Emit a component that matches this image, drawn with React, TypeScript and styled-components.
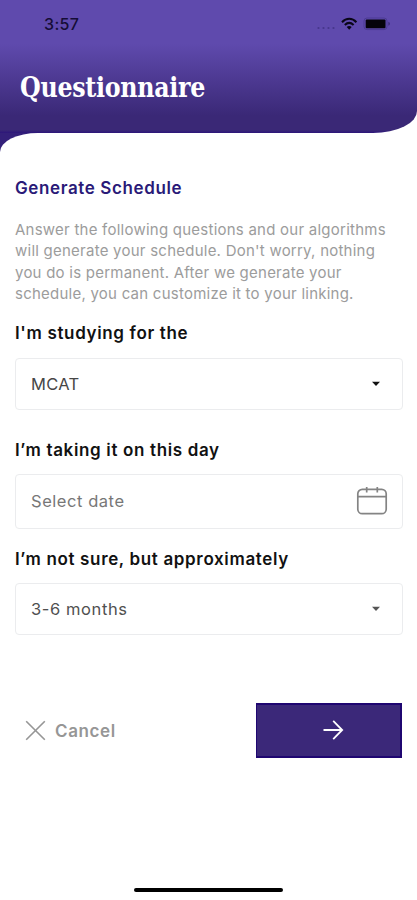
import React from "react";
import styled, { createGlobalStyle } from "styled-components";

const GlobalStyle = createGlobalStyle`
  *, *::before, *::after { box-sizing: border-box; }
  html, body { margin: 0; background: #fff; }
  body { font-family: Inter, "Liberation Sans", sans-serif; }
  button { font: inherit; border: 0; background: none; padding: 0; margin: 0; }
  h1, h2, p { margin: 0; }
`;

const Screen = styled.div`
  width: 417px;
  height: 900px;
  display: flex;
  flex-direction: column;
  background: #fff;
  overflow: hidden;
`;

const HeaderBackdrop = styled.div`
  background: #fff;
  height: 133px;
  flex: none;
`;

const Header = styled.header`
  height: 133px;
  background: linear-gradient(#5f4aad 0, #5f4aad 44px, #3a2876 116px, #3a2876 130px, #2c157a 133px);
  border-bottom-right-radius: 44px 22px;
`;

const StatusBar = styled.div`
  height: 48px;
  display: flex;
  align-items: center;
  justify-content: space-between;
  padding: 0 26px 0 44px;
`;

const Clock = styled.span`
  font-size: 16px;
  line-height: 20px;
  font-weight: 500;
  letter-spacing: 0.35px;
  color: #150d35;
`;

const Title = styled.h1`
  padding: 21px 0 0 20px;
  font-family: "DejaVu Serif Condensed", "DejaVu Serif", serif;
  font-stretch: condensed;
  font-weight: 700;
  font-size: 27.5px;
  line-height: 36px;
  letter-spacing: -0.3px;
  color: #fff;
  white-space: nowrap;

  span {
    display: inline-block;
    transform: scaleX(0.96);
    transform-origin: left center;
  }
`;

const Shoulder = styled.div`
  height: 19px;
  flex: none;
  background: linear-gradient(90deg, #34207a 60px, #fff 60px);
`;

const ShoulderCurve = styled.div`
  height: 100%;
  background: #fff;
  border-top-left-radius: 38px 19px;
`;

const Content = styled.main`
  flex: 1;
  padding: 24px 15px 0;
  display: flex;
  flex-direction: column;
`;

const Heading = styled.h2`
  font-size: 17px;
  line-height: 24px;
  font-weight: 600;
  letter-spacing: 0.62px;
  color: #2a1a78;
`;

const Intro = styled.p`
  margin-top: 19px;
  font-size: 15px;
  line-height: 21.4px;
  letter-spacing: 0.24px;
  color: #9c9c9c;
  white-space: nowrap;
`;

const Label = styled.div<{ $gap: number }>`
  margin-top: ${(p) => p.$gap}px;
  font-size: 17px;
  line-height: 24px;
  font-weight: 600;
  letter-spacing: 0.65px;
  color: #111;
  white-space: nowrap;
`;

const Field = styled.button<{ $gap: number; $height: number; $tone: string }>`
  margin-top: ${(p) => p.$gap}px;
  width: 388px;
  height: ${(p) => p.$height}px;
  flex: none;
  padding: 0 14px 0 15px;
  display: flex;
  align-items: center;
  justify-content: space-between;
  border: 1.5px solid #ebecee;
  border-radius: 4px;
  background: #fff;
  color: ${(p) => p.$tone};
`;

const Value = styled.span<{ $spacing: number }>`
  font-size: 16.5px;
  line-height: 24px;
  letter-spacing: ${(p) => p.$spacing}px;
`;

const Caret = styled.svg`
  margin-right: 7px;
  display: block;
`;

const Actions = styled.div`
  margin-top: 68px;
  width: 386.5px;
  height: 55px;
  display: flex;
  align-items: center;
  justify-content: space-between;
`;

const Cancel = styled.button`
  margin-left: 10px;
  display: flex;
  align-items: center;
  gap: 9px;
  color: #969696;
  font-size: 17px;
  line-height: 24px;
  font-weight: 600;
  letter-spacing: 0.6px;

  span {
    padding-top: 2px;
  }
`;

const Next = styled.button`
  width: 146px;
  height: 55px;
  display: flex;
  align-items: center;
  justify-content: center;
  padding-left: 10px;
  border: 2px solid #1f0671;
  border-left-width: 1px;
  background: #3b2879;
`;

const HomeBar = styled.div`
  width: 149px;
  height: 4px;
  margin: 0 auto 8px;
  border-radius: 2px;
  background: #000;
  flex: none;
`;

const StatusIcons = () => (
  <svg width="78" height="16" viewBox="0 0 78 16" fill="none">
    <g fill="#46368c">
      <circle cx="5.5" cy="12" r="1.1" />
      <circle cx="10.5" cy="12" r="1.1" />
      <circle cx="15.5" cy="12" r="1.1" />
      <circle cx="20.5" cy="12" r="1.1" />
    </g>
    <g stroke="#0a0618" strokeWidth="2">
      <path d="M29 6.2C33.2 1.7 39.2 1.7 43.4 6.2" />
      <path d="M31.8 9C34.6 6.3 37.8 6.3 40.6 9" />
    </g>
    <path d="M33.7 11.1C35.2 9.7 37.2 9.7 38.7 11.1L36.2 13.8Z" fill="#0a0618" />
    <rect x="51" y="2" width="23" height="11.6" rx="3" stroke="#4c3b94" />
    <rect x="52.7" y="3.6" width="19.8" height="8.6" rx="1" fill="#05030a" />
    <path d="M75.4 5.8v4q1.5-.6 1.5-2t-1.5-2Z" fill="#3d2e7c" />
  </svg>
);

const CaretIcon = ({ color }: { color: string }) => (
  <Caret width="10" height="6" viewBox="0 0 10 6">
    <path d="M1 .8H9L5 4.9Z" fill={color} />
  </Caret>
);

const CalendarIcon = () => (
  <svg width="32" height="30" viewBox="0 0 32 30" fill="none" stroke="#848484" strokeWidth="1.7">
    <rect x="1.8" y="3.3" width="28.4" height="24.4" rx="4.5" />
    <path d="M2 10.7H30M10.7 1v5.5M21.3 1v5.5" />
  </svg>
);

const CrossIcon = () => (
  <svg width="21" height="21" viewBox="0 0 21 21" stroke="#969696" strokeWidth="1.6">
    <path d="M1.2 1.2 19.8 19.8M19.8 1.2 1.2 19.8" />
  </svg>
);

const ArrowIcon = () => (
  <svg width="22" height="22" viewBox="0 0 22 22" fill="none" stroke="#fff" strokeWidth="1.8">
    <path d="M1.5 11H20M11.2 1.8 20.2 11 11.2 20.2" />
  </svg>
);

export default function App() {
  return (
    <Screen>
      <GlobalStyle />
      <HeaderBackdrop>
        <Header>
          <StatusBar>
            <Clock>3:57</Clock>
            <StatusIcons />
          </StatusBar>
          <Title>
            <span>Questionnaire</span>
          </Title>
        </Header>
      </HeaderBackdrop>
      <Shoulder>
        <ShoulderCurve />
      </Shoulder>
      <Content>
        <Heading>Generate Schedule</Heading>
        <Intro>
          Answer the following questions and our algorithms
          <br />
          will generate your schedule. Don't worry, nothing
          <br />
          you do is permanent. After we generate your
          <br />
          schedule, you can customize it to your linking.
        </Intro>
        <Label $gap={16}>I'm studying for the</Label>
        <Field $gap={13} $height={52} $tone="#464646">
          <Value $spacing={0.3}>MCAT</Value>
          <CaretIcon color="#111" />
        </Field>
        <Label $gap={28}>I’m taking it on this day</Label>
        <Field $gap={12} $height={55} $tone="#777">
          <Value $spacing={0.55}>Select date</Value>
          <CalendarIcon />
        </Field>
        <Label $gap={18}>I’m not sure, but approximately</Label>
        <Field $gap={12} $height={52} $tone="#505050">
          <Value $spacing={0.6}>3-6 months</Value>
          <CaretIcon color="#555" />
        </Field>
        <Actions>
          <Cancel>
            <CrossIcon />
            <span>Cancel</span>
          </Cancel>
          <Next aria-label="Next">
            <ArrowIcon />
          </Next>
        </Actions>
      </Content>
      <HomeBar />
    </Screen>
  );
}
